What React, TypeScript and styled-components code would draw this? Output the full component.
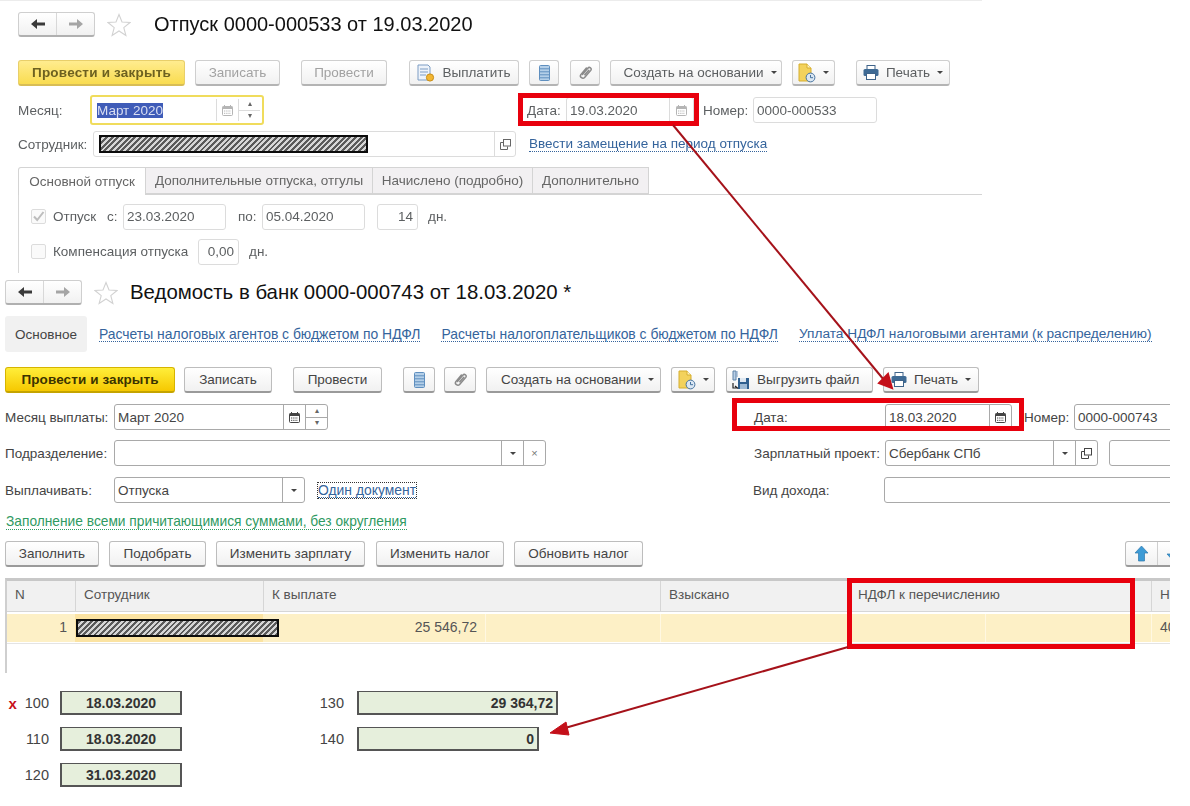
import React from 'react';
import styled, { createGlobalStyle, css } from 'styled-components';

const GlobalStyle = createGlobalStyle`
  html, body { margin: 0; padding: 0; background: #fff; }
  body { font-family: "Liberation Sans", Arial, sans-serif; font-size: 13px; }
  * { box-sizing: border-box; }
`;

const Page = styled.div`
  position: relative;
  width: 1190px;
  height: 806px;
  overflow: hidden;
  background: #fff;
`;

/* ---------- windows ---------- */

const TopWindow = styled.section`
  --line: #dcdcdc;
  --text: #5c5f61;
  --btn-line: #cfcfcf;
  --btn-under: #b4b4b4;
  height: 272px;
  width: 982px;
  padding: 11px 0 0 18px;
  border-top: 1px solid #ececec;
  filter: blur(0.35px);
  color: var(--text);
`;

const BottomWindow = styled.section`
  --line: #a9a9a9;
  --text: #444;
  --btn-line: #bdbdbd;
  --btn-under: #9a9a9a;
  width: 1170px;
  height: 534px;
  padding: 8px 0 0 5px;
  overflow: hidden;
  color: var(--text);
`;

const TitleRow = styled.div`
  display: flex;
  align-items: center;
  height: 25px;
`;

const NavGroup = styled.div`
  display: flex;
  width: 77px;
  height: 25px;
  border: 1px solid #cfcfcf;
  border-bottom: 2px solid #b0b0b0;
  border-radius: 3px;
  background: linear-gradient(#fff, #f1f1f1);
`;

const NavCell = styled.div<{ $divided?: boolean }>`
  flex: 1;
  display: flex;
  align-items: center;
  justify-content: center;
  ${(p) => p.$divided && 'border-left: 1px solid #d8d8d8;'}
`;

const StarSlot = styled.div`
  display: flex;
  width: 24px;
  margin: 0 12px 0 12px;
`;

const TitleText = styled.h1<{ $ml?: number; $size: number }>`
  margin: 0 0 0 ${(p) => p.$ml ?? 0}px;
  font-size: ${(p) => p.$size}px;
  font-weight: 400;
  color: #111;
  white-space: nowrap;
`;

const Toolbar = styled.div<{ $mt: number }>`
  display: flex;
  align-items: center;
  height: 26px;
  margin-top: ${(p) => p.$mt}px;
`;

const Btn = styled.div<{
  $w: number;
  $ml?: number;
  $pl?: number;
  $start?: boolean;
  $primary?: boolean;
  $muted?: boolean;
  $soft?: boolean;
}>`
  display: flex;
  align-items: center;
  justify-content: ${(p) => (p.$start ? 'flex-start' : 'center')};
  gap: 7px;
  flex: none;
  width: ${(p) => p.$w}px;
  height: 26px;
  margin-left: ${(p) => p.$ml ?? 0}px;
  padding-left: ${(p) => p.$pl ?? 0}px;
  border: 1px solid var(--btn-line);
  border-bottom: 2px solid var(--btn-under);
  border-radius: 3px;
  background: linear-gradient(#ffffff, #f1f1f1);
  font-size: 13.5px;
  color: ${(p) => (p.$muted ? '#a2a2a2' : 'var(--text)')};
  white-space: nowrap;
  ${(p) =>
    p.$primary &&
    css`
      border-color: ${p.$soft ? '#e8cf6a' : '#d6b400'};
      border-bottom-color: ${p.$soft ? '#d8bd55' : '#c5a400'};
      background: ${p.$soft
        ? 'linear-gradient(#ffec8f, #f9dc50)'
        : 'linear-gradient(#ffee3a, #f6c800)'};
      color: ${p.$soft ? '#6d6120' : '#3b3300'};
      font-weight: 700;
      letter-spacing: ${p.$soft ? 0.2 : 0.1}px;
    `}
`;

const Caret = styled.span<{ $ml?: number }>`
  display: inline-block;
  width: 0;
  height: 0;
  margin-left: ${(p) => p.$ml ?? 0}px;
  border-left: 3px solid transparent;
  border-right: 3px solid transparent;
  border-top: 3px solid #444;
`;

const FormRow = styled.div<{ $mt: number; $h?: number }>`
  display: flex;
  align-items: center;
  height: ${(p) => p.$h ?? 26}px;
  margin-top: ${(p) => p.$mt}px;
`;

const Label = styled.span<{ $w?: number; $ml?: number }>`
  flex: none;
  width: ${(p) => (p.$w ? `${p.$w}px` : 'auto')};
  margin-left: ${(p) => p.$ml ?? 0}px;
  font-size: 13.5px;
  color: var(--text);
  white-space: nowrap;
`;

const Field = styled.div<{ $w: number; $ml?: number; $focus?: boolean }>`
  display: flex;
  align-items: stretch;
  flex: none;
  width: ${(p) => p.$w}px;
  height: ${(p) => (p.$focus ? 30 : 26)}px;
  margin-left: ${(p) => p.$ml ?? 0}px;
  border: ${(p) => (p.$focus ? '2px solid #f0dc5c' : '1px solid var(--line)')};
  border-radius: 3px;
  background: #fff;
  padding: ${(p) => (p.$focus ? '2px' : '0')};
`;

const FieldText = styled.div<{ $right?: boolean }>`
  flex: 1;
  min-width: 0;
  display: flex;
  align-items: center;
  justify-content: ${(p) => (p.$right ? 'flex-end' : 'flex-start')};
  padding: 0 4px 0 3px;
  font-size: 13.5px;
  color: var(--text);
  white-space: nowrap;
`;

const Selected = styled.span`
  background: #3f5cb8;
  color: #d9def2;
`;

const FieldBtn = styled.div<{ $w?: number }>`
  flex: none;
  width: ${(p) => p.$w ?? 22}px;
  display: flex;
  align-items: center;
  justify-content: center;
  border-left: 1px solid var(--line);
  color: #777;
  font-size: 11px;
`;

const Spin = styled.div`
  flex: none;
  width: 22px;
  display: flex;
  flex-direction: column;
  border-left: 1px solid var(--line);
`;

const SpinCell = styled.div<{ $bottom?: boolean }>`
  flex: 1;
  display: flex;
  align-items: center;
  justify-content: center;
  font-size: 8px;
  line-height: 1;
  color: #666;
  ${(p) => p.$bottom && 'border-top: 1px solid var(--line);'}
`;

const Hatch = styled.div<{ $w: number; $ml?: number }>`
  flex: none;
  width: ${(p) => p.$w}px;
  height: 18px;
  margin-left: ${(p) => p.$ml ?? 0}px;
  border: 2px solid #0c0c0c;
  background: repeating-linear-gradient(-45deg, #5a5a5a 0 2px, #d6d6d6 2px 4px);
`;

const LinkText = styled.a<{ $ml?: number; $color?: string; $size?: number }>`
  flex: none;
  margin-left: ${(p) => p.$ml ?? 0}px;
  font-size: ${(p) => p.$size ?? 13.9}px;
  color: ${(p) => p.$color ?? '#35649c'};
  border-bottom: 1px dotted ${(p) => p.$color ?? '#35649c'};
  line-height: 14px;
  white-space: nowrap;
`;

const OutlinedLink = styled(LinkText)`
  outline: 1px dotted #333;
`;

/* ---------- tabs of the upper window ---------- */

const TabBar = styled.div`
  display: flex;
  height: 28px;
  margin-top: 11px;
  border-bottom: 1px solid #d4d4d4;
`;

const Tab = styled.div<{ $w: number; $active?: boolean }>`
  display: flex;
  align-items: center;
  justify-content: center;
  flex: none;
  width: ${(p) => p.$w}px;
  height: ${(p) => (p.$active ? 28 : 27)}px;
  border: 1px solid #d4d4d4;
  border-left-width: ${(p) => (p.$active ? 1 : 0)}px;
  border-bottom: ${(p) => (p.$active ? 'none' : '1px solid #d4d4d4')};
  border-radius: ${(p) => (p.$active ? '3px 0 0 0' : '0')};
  background: ${(p) => (p.$active ? '#fff' : '#f2f0f2')};
  font-size: 13.5px;
  color: #666;
  white-space: nowrap;
`;

const TabBody = styled.div`
  height: 78px;
  padding: 9px 0 0 12px;
  border-left: 1px solid #d8d8d8;
`;

const Check = styled.div`
  flex: none;
  display: flex;
  align-items: center;
  justify-content: center;
  width: 15px;
  height: 15px;
  border: 1px solid #dcdcdc;
  border-radius: 2px;
  background: #fafafa;
`;

/* ---------- table ---------- */

const RowTabs = styled.div`
  display: flex;
  align-items: center;
  height: 36px;
  margin-top: 11px;
`;

const Chip = styled.div`
  flex: none;
  display: flex;
  align-items: center;
  justify-content: center;
  width: 82px;
  height: 36px;
  border-radius: 3px;
  background: #f1f1f1;
  font-size: 13.5px;
  color: #444;
`;

const ButtonsRow = styled.div`
  display: flex;
  align-items: center;
  height: 26px;
  margin-top: 11px;
`;

const ArrowsGroup = styled.div`
  display: flex;
  flex: none;
  width: 60px;
  height: 26px;
  margin-left: 482px;
  border: 1px solid var(--btn-line);
  border-bottom: 2px solid var(--btn-under);
  border-radius: 3px;
  background: linear-gradient(#fff, #f1f1f1);
`;

const ArrowCell = styled.div<{ $divided?: boolean }>`
  flex: none;
  width: 31px;
  display: flex;
  align-items: center;
  justify-content: center;
  ${(p) => p.$divided && 'border-left: 1px solid #cfcfcf;'}
`;

const Table = styled.div`
  width: 1165px;
  height: 95px;
  margin-top: 11px;
  border-top: 3px solid #c8c8c8;
  border-left: 2px solid #cfcfcf;
`;

const HeadRow = styled.div`
  display: grid;
  grid-template-columns: 68px 188px 397px 190px 301px 19px;
  height: 31px;
  background: #f1f1f1;
  border-bottom: 1px solid #d6d6d6;
`;

const HeadCell = styled.div<{ $divided?: boolean }>`
  display: flex;
  align-items: center;
  padding: 0 0 3px 8px;
  font-size: 13.5px;
  color: #555;
  white-space: nowrap;
  ${(p) => p.$divided && 'border-left: 1px solid #d6d6d6;'}
`;

const DataRow = styled.div`
  display: grid;
  grid-template-columns: 68px 188px 222px 175px 190px 135px 166px 19px;
  height: 28px;
  margin-top: 2px;
  background: #fdf0c6;
  box-shadow: 0 1px 0 #fff, 0 2px 0 #e4e4e4;
`;

const DataCell = styled.div<{ $right?: boolean; $picked?: boolean; $divided?: boolean }>`
  display: flex;
  align-items: center;
  justify-content: ${(p) => (p.$right ? 'flex-end' : 'flex-start')};
  padding: ${(p) => (p.$right ? '0 8px 2px 0' : '0 0 2px 8px')};
  font-size: 14px;
  color: #555;
  white-space: nowrap;
  ${(p) => p.$picked && 'background: #fbe3a2; padding: 0;'}
  ${(p) => p.$divided && 'border-left: 1px solid #fff8e2;'}
`;

/* ---------- result codes under the table ---------- */

const Results = styled.div`
  display: flex;
  padding: 18px 0 0 10px;
`;

const ResultColumn = styled.div<{ $ml?: number }>`
  display: flex;
  flex-direction: column;
  gap: 12px;
  margin-left: ${(p) => p.$ml ?? 0}px;
`;

const ResultRow = styled.div`
  display: flex;
  align-items: center;
  height: 24px;
`;

const ResultCode = styled.span<{ $w: number }>`
  display: flex;
  justify-content: flex-end;
  align-items: center;
  gap: 8px;
  flex: none;
  width: ${(p) => p.$w}px;
  font-size: 14.5px;
  color: #444;
`;

const Mark = styled.b`
  margin-right: auto;
  color: #c8101a;
  font-size: 15px;
`;

const ResultBox = styled.div<{ $w: number; $ml: number; $right?: boolean }>`
  display: flex;
  align-items: center;
  justify-content: ${(p) => (p.$right ? 'flex-end' : 'center')};
  flex: none;
  width: ${(p) => p.$w}px;
  height: 24px;
  margin-left: ${(p) => p.$ml}px;
  padding-right: ${(p) => (p.$right ? 3 : 0)}px;
  border: 2px solid #555;
  border-top-width: 1.5px;
  background: #e6efdc;
  font-size: 14px;
  font-weight: 700;
  color: #333;
`;

/* ---------- red marks drawn over the screenshots ---------- */

const RedFrame = styled.div<{ $x: number; $y: number; $w: number; $h: number }>`
  position: absolute;
  left: ${(p) => p.$x}px;
  top: ${(p) => p.$y}px;
  width: ${(p) => p.$w}px;
  height: ${(p) => p.$h}px;
  border: 5px solid #e8000d;
`;

const ArrowLayer = styled.svg`
  position: absolute;
  inset: 0;
  width: 1190px;
  height: 806px;
  pointer-events: none;
`;

/* ---------- icons ---------- */

const NavArrow = ({ dir, color }: { dir: 'left' | 'right'; color: string }) => (
  <svg width="16" height="12" viewBox="0 0 16 12">
    <path
      transform={dir === 'right' ? 'matrix(-1 0 0 1 16 0)' : undefined}
      d="M1 6 L7 1 V4.6 H15 V7.4 H7 V11 Z"
      fill={color}
    />
  </svg>
);

const StarIcon = () => (
  <svg width="24" height="24" viewBox="0 0 24 24">
    <path
      d="M12 1.5 L15 9 L23 9.5 L16.8 14.6 L18.9 22.5 L12 18 L5.1 22.5 L7.2 14.6 L1 9.5 L9 9 Z"
      fill="#fff"
      stroke="#d2d2d2"
      strokeWidth="1.1"
    />
  </svg>
);

const ListIcon = () => (
  <svg width="11" height="16" viewBox="0 0 11 16">
    <rect x="0.5" y="0.5" width="10" height="15" rx="1" fill="#b4cfe8" stroke="#5f8fbf" />
    <path d="M1 3.8 H10 M1 6.8 H10 M1 9.8 H10 M1 12.8 H10" stroke="#5f8fbf" strokeWidth="1" />
  </svg>
);

const ClipIcon = () => (
  <svg width="15" height="15" viewBox="0 0 15 15">
    <path
      d="M4.5 9.5 L9.8 3.2 C11.4 1.3 14.3 3.3 12.8 5.4 L6.6 12.4 C4.8 14.4 1.2 12.2 2.8 9.6 L8.4 3 M6.8 9.8 L10.8 5.2"
      fill="none"
      stroke="#8a8a8a"
      strokeWidth="1.5"
      strokeLinecap="round"
    />
  </svg>
);

const DocClockIcon = () => (
  <svg width="18" height="20" viewBox="0 0 18 20">
    <path d="M1 1 H9 L13 5 V18 H1 Z" fill="#f3d25c" stroke="#d6ae2f" />
    <path d="M9 1 V5 H13" fill="#fff3c0" stroke="#d6ae2f" />
    <circle cx="12.5" cy="14.5" r="4.4" fill="#dbe7f3" stroke="#47739f" />
    <path d="M12.5 12 V14.7 H15" fill="none" stroke="#47739f" />
  </svg>
);

const PrintIcon = () => (
  <svg width="16" height="15" viewBox="0 0 16 15">
    <rect x="4" y="0.5" width="8" height="4" fill="#fff" stroke="#3e6389" />
    <rect x="0.5" y="4" width="15" height="7" rx="1.5" fill="#3e6a94" />
    <rect x="3.5" y="8.5" width="9" height="6" fill="#fff" stroke="#3e6389" />
  </svg>
);

const PayIcon = () => (
  <svg width="18" height="18" viewBox="0 0 18 18">
    <path d="M1 1 H11 L13 3 V16 H1 Z" fill="#eef3fa" stroke="#7c9dc4" />
    <path d="M3 5 H11 M3 8 H11 M3 11 H9" stroke="#7c9dc4" />
    <circle cx="13" cy="13.5" r="3.6" fill="#f2b632" stroke="#c98d14" />
  </svg>
);

const UploadIcon = () => (
  <svg width="18" height="20" viewBox="0 0 18 20">
    <path d="M1 1 V10 H4 V1 Z" fill="#b9cfe6" stroke="#5f83a8" />
    <path d="M5 1 V7" stroke="#7c9dc4" />
    <rect x="6" y="8" width="11" height="11" fill="#2f5f8f" />
    <rect x="8" y="8" width="6" height="4" fill="#dfe8f1" />
    <rect x="8" y="14" width="7" height="5" fill="#9db9d4" />
    <path d="M1 13 V18 H5 M3 16 L6 18.5" fill="none" stroke="#222" strokeWidth="1.2" />
  </svg>
);

const CalendarIcon = ({ color }: { color: string }) => (
  <svg width="11" height="11" viewBox="0 0 11 11">
    <rect x="0.5" y="1.5" width="10" height="9" rx="1" fill="#fff" stroke={color} />
    <rect x="0.5" y="1.5" width="10" height="2.5" fill={color} />
    <path d="M2.5 0 V2 M8.5 0 V2" stroke={color} />
    <path d="M2 6 H9 M2 8.3 H9" stroke={color} strokeDasharray="1.3 0.9" />
  </svg>
);

const OpenIcon = ({ color }: { color: string }) => (
  <svg width="11" height="11" viewBox="0 0 11 11">
    <rect x="3.5" y="0.5" width="7" height="6.5" fill="#fff" stroke={color} />
    <path d="M3 3.5 H0.5 V10.5 H7.5 V7.5" fill="none" stroke={color} />
  </svg>
);

const BlueArrow = ({ down }: { down?: boolean }) => (
  <svg width="15" height="17" viewBox="0 0 15 17">
    <path
      transform={down ? 'matrix(1 0 0 -1 0 17)' : undefined}
      d="M7.5 1 L14 8 H10.5 V16 H4.5 V8 H1 Z"
      fill="#3d9bd6"
      stroke="#2f78ad"
      strokeWidth="0.7"
    />
  </svg>
);

const CheckMark = () => (
  <svg width="13" height="13" viewBox="0 0 13 13">
    <path d="M2 6.5 L5.2 10 L11.5 2" fill="none" stroke="#bdbdbd" strokeWidth="2" />
  </svg>
);

const TitleBlock = ({ title, ml, size }: { title: string; ml: number; size: number }) => (
  <TitleRow>
    <NavGroup>
      <NavCell>
        <NavArrow dir="left" color="#3a3a3a" />
      </NavCell>
      <NavCell $divided>
        <NavArrow dir="right" color="#a5a5a5" />
      </NavCell>
    </NavGroup>
    <StarSlot>
      <StarIcon />
    </StarSlot>
    <TitleText $ml={ml} $size={size}>{title}</TitleText>
  </TitleRow>
);

const Spinner = () => (
  <Spin>
    <SpinCell>▴</SpinCell>
    <SpinCell $bottom>▾</SpinCell>
  </Spin>
);

const results = [
  { code: '100', date: '18.03.2020', mark: true },
  { code: '110', date: '18.03.2020' },
  { code: '120', date: '31.03.2020' },
];

const sums = [
  { code: '130', sum: '29 364,72', w: 201 },
  { code: '140', sum: '0', w: 182 },
];

const App = () => (
  <Page>
    <GlobalStyle />

    <TopWindow>
      <TitleBlock title="Отпуск 0000-000533 от 19.03.2020" ml={11} size={20} />
      <Toolbar $mt={23}>
        <Btn $w={167} $primary $soft>Провести и закрыть</Btn>
        <Btn $w={85} $ml={10} $muted>Записать</Btn>
        <Btn $w={86} $ml={21} $muted>Провести</Btn>
        <Btn $w={110} $ml={22}><PayIcon />Выплатить</Btn>
        <Btn $w={30} $ml={10}><ListIcon /></Btn>
        <Btn $w={30} $ml={11}><ClipIcon /></Btn>
        <Btn $w={172} $ml={10} $pl={8}>Создать на основании<Caret /></Btn>
        <Btn $w={43} $ml={10}><DocClockIcon /><Caret /></Btn>
        <Btn $w={94} $ml={21}><PrintIcon />Печать<Caret /></Btn>
      </Toolbar>
      <FormRow $mt={9} $h={30}>
        <Label $w={72}>Месяц:</Label>
        <Field $w={174} $focus>
          <FieldText><Selected>Март 2020</Selected></FieldText>
          <FieldBtn><CalendarIcon color="#b5b5b5" /></FieldBtn>
          <Spinner />
        </Field>
        <Label $ml={263} $w={39}>Дата:</Label>
        <Field $w={128}>
          <FieldText>19.03.2020</FieldText>
          <FieldBtn $w={24}><CalendarIcon color="#b5b5b5" /></FieldBtn>
        </Field>
        <Label $ml={9} $w={50}>Номер:</Label>
        <Field $w={124}>
          <FieldText>0000-000533</FieldText>
        </Field>
      </FormRow>
      <FormRow $mt={7} $h={24}>
        <Label $w={75}>Сотрудник:</Label>
        <Field $w={423}>
          <FieldText>
            <Hatch $w={269} $ml={2} />
          </FieldText>
          <FieldBtn $w={21}><OpenIcon color="#666" /></FieldBtn>
        </Field>
        <LinkText $ml={13} $size={13.5}>Ввести замещение на период отпуска</LinkText>
      </FormRow>
      <TabBar>
        <Tab $w={128} $active>Основной отпуск</Tab>
        <Tab $w={227}>Дополнительные отпуска, отгулы</Tab>
        <Tab $w={160}>Начислено (подробно)</Tab>
        <Tab $w={116}>Дополнительно</Tab>
      </TabBar>
      <TabBody>
        <FormRow $mt={0} $h={25}>
          <Check><CheckMark /></Check>
          <Label $ml={7} $w={54}>Отпуск</Label>
          <Label $w={16}>с:</Label>
          <Field $w={103}><FieldText>23.03.2020</FieldText></Field>
          <Label $ml={12} $w={24}>по:</Label>
          <Field $w={103}><FieldText>05.04.2020</FieldText></Field>
          <Field $w={41} $ml={12}><FieldText $right>14</FieldText></Field>
          <Label $ml={10}>дн.</Label>
        </FormRow>
        <FormRow $mt={10} $h={25}>
          <Check />
          <Label $ml={7} $w={145}>Компенсация отпуска</Label>
          <Field $w={41}><FieldText $right>0,00</FieldText></Field>
          <Label $ml={10}>дн.</Label>
        </FormRow>
      </TabBody>
    </TopWindow>

    <BottomWindow>
      <TitleBlock title="Ведомость в банк 0000-000743 от 18.03.2020 *" ml={0} size={20.4} />
      <RowTabs>
        <Chip>Основное</Chip>
        <LinkText $ml={12}>Расчеты налоговых агентов с бюджетом по НДФЛ</LinkText>
        <LinkText $ml={21}>Расчеты налогоплательщиков с бюджетом по НДФЛ</LinkText>
        <LinkText $ml={21} $size={13.7}>Уплата НДФЛ налоговыми агентами (к распределению)</LinkText>
      </RowTabs>
      <Toolbar $mt={15}>
        <Btn $w={170} $primary>Провести и закрыть</Btn>
        <Btn $w={88} $ml={9}>Записать</Btn>
        <Btn $w={89} $ml={21}>Провести</Btn>
        <Btn $w={32} $ml={21}><ListIcon /></Btn>
        <Btn $w={32} $ml={9}><ClipIcon /></Btn>
        <Btn $w={175} $ml={10} $pl={8}>Создать на основании<Caret /></Btn>
        <Btn $w={44} $ml={10}><DocClockIcon /><Caret /></Btn>
        <Btn $w={147} $ml={11} $start $pl={5}><UploadIcon />Выгрузить файл</Btn>
        <Btn $w={96} $ml={10}><PrintIcon />Печать<Caret /></Btn>
      </Toolbar>
      <FormRow $mt={11}>
        <Label $w={109}>Месяц выплаты:</Label>
        <Field $w={214}>
          <FieldText>Март 2020</FieldText>
          <FieldBtn><CalendarIcon color="#444" /></FieldBtn>
          <Spinner />
        </Field>
        <Label $ml={426} $w={131}>Дата:</Label>
        <Field $w={127}>
          <FieldText>18.03.2020</FieldText>
          <FieldBtn><CalendarIcon color="#444" /></FieldBtn>
        </Field>
        <Label $ml={12} $w={50}>Номер:</Label>
        <Field $w={120}><FieldText>0000-000743</FieldText></Field>
      </FormRow>
      <FormRow $mt={10}>
        <Label $w={109}>Подразделение:</Label>
        <Field $w={432}>
          <FieldText />
          <FieldBtn><Caret /></FieldBtn>
          <FieldBtn>×</FieldBtn>
        </Field>
        <Label $ml={208} $w={131}>Зарплатный проект:</Label>
        <Field $w={213}>
          <FieldText>Сбербанк СПб</FieldText>
          <FieldBtn><Caret /></FieldBtn>
          <FieldBtn><OpenIcon color="#444" /></FieldBtn>
        </Field>
        <Field $w={120} $ml={11} />
      </FormRow>
      <FormRow $mt={11}>
        <Label $w={109}>Выплачивать:</Label>
        <Field $w={191}>
          <FieldText>Отпуска</FieldText>
          <FieldBtn><Caret /></FieldBtn>
        </Field>
        <OutlinedLink $ml={13}>Один документ</OutlinedLink>
        <Label $ml={337} $w={131}>Вид дохода:</Label>
        <Field $w={320} />
      </FormRow>
      <FormRow $mt={11} $h={16}>
        <LinkText $ml={1} $size={13.75} $color="#2f9a62">Заполнение всеми причитающимися суммами, без округления</LinkText>
      </FormRow>
      <ButtonsRow>
        <Btn $w={94}>Заполнить</Btn>
        <Btn $w={97} $ml={10}>Подобрать</Btn>
        <Btn $w={149} $ml={10}>Изменить зарплату</Btn>
        <Btn $w={128} $ml={11}>Изменить налог</Btn>
        <Btn $w={129} $ml={10}>Обновить налог</Btn>
        <ArrowsGroup>
          <ArrowCell><BlueArrow /></ArrowCell>
          <ArrowCell $divided><BlueArrow down /></ArrowCell>
        </ArrowsGroup>
      </ButtonsRow>
      <Table>
        <HeadRow>
          <HeadCell>N</HeadCell>
          <HeadCell $divided>Сотрудник</HeadCell>
          <HeadCell $divided>К выплате</HeadCell>
          <HeadCell $divided>Взыскано</HeadCell>
          <HeadCell>НДФЛ к перечислению</HeadCell>
          <HeadCell $divided>Н</HeadCell>
        </HeadRow>
        <DataRow>
          <DataCell $right>1</DataCell>
          <DataCell $picked>
            <Hatch $w={203} $ml={1} />
          </DataCell>
          <DataCell $right>25 546,72</DataCell>
          <DataCell $divided />
          <DataCell $divided />
          <DataCell />
          <DataCell $divided />
          <DataCell $divided>40</DataCell>
        </DataRow>
      </Table>
      <Results>
        <ResultColumn>
          {results.map((r) => (
            <ResultRow key={r.code}>
              <ResultCode $w={34}>
                {r.mark && <Mark>x</Mark>}
                {r.code}
              </ResultCode>
              <ResultBox $w={122} $ml={11}>{r.date}</ResultBox>
            </ResultRow>
          ))}
        </ResultColumn>
        <ResultColumn $ml={140}>
          {sums.map((s) => (
            <ResultRow key={s.code}>
              <ResultCode $w={22}>{s.code}</ResultCode>
              <ResultBox $w={s.w} $ml={13} $right>{s.sum}</ResultBox>
            </ResultRow>
          ))}
        </ResultColumn>
      </Results>
    </BottomWindow>

    <RedFrame $x={518} $y={93} $w={181} $h={33} />
    <RedFrame $x={732} $y={398} $w={292} $h={33} />
    <RedFrame $x={847} $y={578} $w={288} $h={71} />
    <ArrowLayer viewBox="0 0 1190 806">
      <line x1="673" y1="125" x2="884" y2="380" stroke="#a5121a" strokeWidth="2" />
      <path d="M892 388 L879 383 L888 374 Z" fill="#c4101a" stroke="#c4101a" strokeWidth="2" />
      <line x1="848" y1="647" x2="565" y2="728" stroke="#a5121a" strokeWidth="2" />
      <path d="M550 733 L566 722 L569 735 Z" fill="#c4101a" stroke="#c4101a" strokeWidth="1" />
    </ArrowLayer>
  </Page>
);

export default App;
